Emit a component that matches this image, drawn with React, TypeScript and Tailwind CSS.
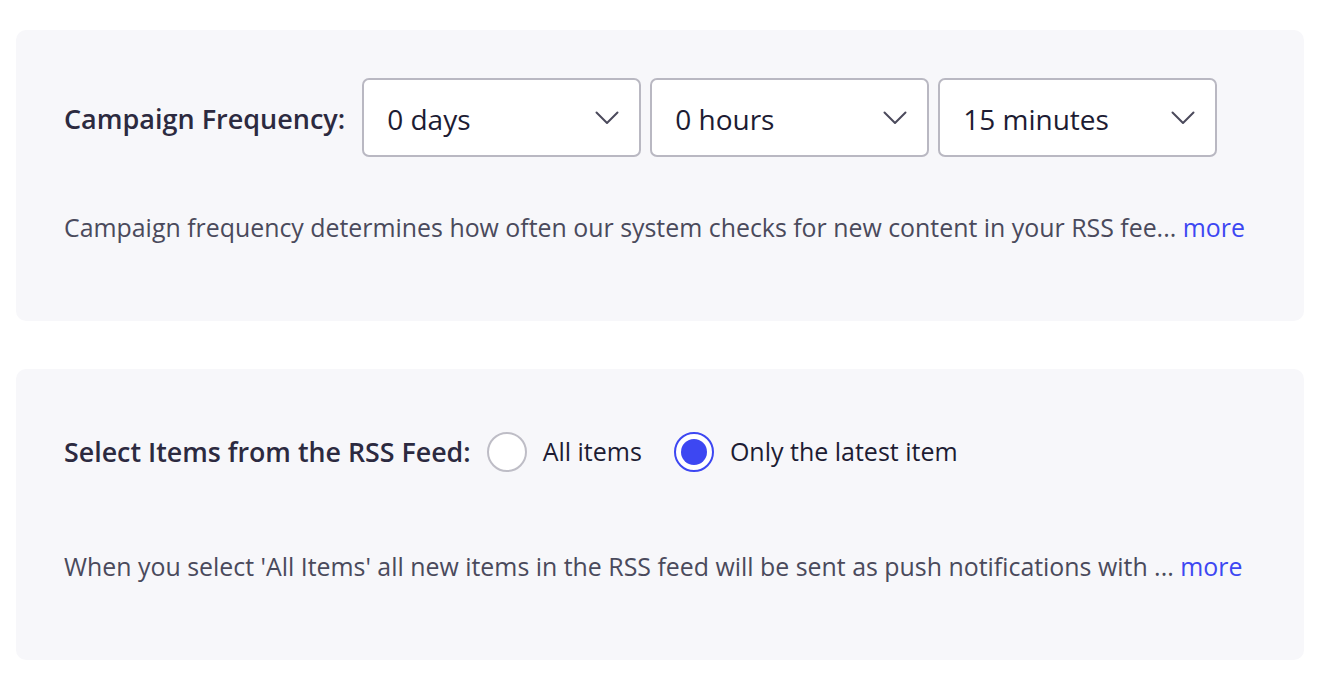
const font = { fontFamily: '"Open Sans", "Noto Sans", sans-serif' };

function Chevron() {
    return (
        <svg width="24" height="14" viewBox="0 0 24 14" fill="none" className="text-[#4b4a5c]">
            <path d="M1.5 1.5L12 12L22.5 1.5" stroke="currentColor" strokeWidth="2" strokeLinecap="round" strokeLinejoin="round" />
        </svg>
    );
}

function Select({ value }: { value: string }) {
    return (
        <div className="w-[279px] h-[79px] bg-white border-2 border-[#b9b8c2] rounded-[7px] pl-[23px] pr-[20px] flex items-center justify-between">
            <span className="text-[28px] text-[#1d1c33] pt-[3px]">{value}</span>
            <Chevron />
        </div>
    );
}

function Radio({ label, checked }: { label: string; checked?: boolean }) {
    return (
        <label className="flex items-center gap-4 mr-8">
            <span
                className={`w-[40px] h-[40px] rounded-full bg-white border-2 flex items-center justify-center ${checked ? 'border-[#3d47f2]' : 'border-[#bebdc6]'}`}
            >
                {checked && <span className="w-[26px] h-[26px] rounded-full bg-[#3d47f2]"></span>}
            </span>
            <span className="text-[25px] text-[#1d1c33]">{label}</span>
        </label>
    );
}

export default function App() {
    return (
        <div className="min-h-screen bg-white pt-[30px] pl-4 pr-5 space-y-12" style={font}>
            {/* Campaign frequency */}
            <div className="h-[291px] bg-[#f7f7fa] rounded-[10px] pt-12 px-12">
                <div className="flex items-center h-[79px]">
                    <span className="text-[27px] font-semibold text-[#2c2a40] mr-[17px] pt-[3px]">Campaign Frequency:</span>
                    <div className="flex gap-[9px]">
                        <Select value="0 days" />
                        <Select value="0 hours" />
                        <Select value="15 minutes" />
                    </div>
                </div>
                <p className="mt-[52px] leading-9 text-[24.9px] text-[#4a4a5c] whitespace-nowrap">
                    Campaign frequency determines how often our system checks for new content in your RSS fee...{' '}
                    <a className="text-[#3d47f2]">more</a>
                </p>
            </div>

            {/* RSS items */}
            <div className="h-[291px] bg-[#f7f7fa] rounded-[10px] pt-12 px-12">
                <div className="flex items-center h-[70px]">
                    <span className="text-[26.8px] font-semibold text-[#2c2a40] mr-4">Select Items from the RSS Feed:</span>
                    <Radio label="All items" />
                    <Radio label="Only the latest item" checked />
                </div>
                <p className="mt-[61px] leading-9 text-[24.9px] text-[#4a4a5c] whitespace-nowrap">
                    When you select 'All Items' all new items in the RSS feed will be sent as push notifications with ...{' '}
                    <a className="text-[#3d47f2]">more</a>
                </p>
            </div>
        </div>
    );
}
